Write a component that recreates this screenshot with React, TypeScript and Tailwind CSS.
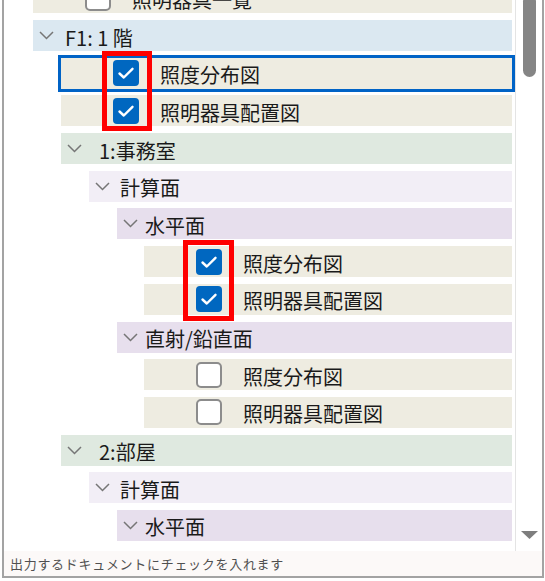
import React from 'react';

type Row =
  | { kind: 'leaf'; indent: string; label: string; checked: boolean; selected?: boolean }
  | { kind: 'group'; indent: string; label: string; bg: string; textGap: string };

const rows: Row[] = [
  { kind: 'leaf', indent: 'ml-[29px]', label: '照明器具一覧', checked: false },
  { kind: 'group', indent: 'ml-[29px]', label: 'F1: 1 階', bg: 'bg-[#dbe8f1]', textGap: 'ml-[11px]' },
  { kind: 'leaf', indent: 'ml-[57px]', label: '照度分布図', checked: true, selected: true },
  { kind: 'leaf', indent: 'ml-[57px]', label: '照明器具配置図', checked: true },
  { kind: 'group', indent: 'ml-[57px]', label: '1:事務室', bg: 'bg-[#dfe9e0]', textGap: 'ml-[17px]' },
  { kind: 'group', indent: 'ml-[85px]', label: '計算面', bg: 'bg-[#f2eef6]', textGap: 'ml-[10px]' },
  { kind: 'group', indent: 'ml-[113px]', label: '水平面', bg: 'bg-[#e7dfed]', textGap: 'ml-[7px]' },
  { kind: 'leaf', indent: 'ml-[140px]', label: '照度分布図', checked: true },
  { kind: 'leaf', indent: 'ml-[140px]', label: '照明器具配置図', checked: true },
  { kind: 'group', indent: 'ml-[113px]', label: '直射/鉛直面', bg: 'bg-[#e7dfed]', textGap: 'ml-[7px]' },
  { kind: 'leaf', indent: 'ml-[140px]', label: '照度分布図', checked: false },
  { kind: 'leaf', indent: 'ml-[140px]', label: '照明器具配置図', checked: false },
  { kind: 'group', indent: 'ml-[57px]', label: '2:部屋', bg: 'bg-[#dfe9e0]', textGap: 'ml-[17px]' },
  { kind: 'group', indent: 'ml-[85px]', label: '計算面', bg: 'bg-[#f2eef6]', textGap: 'ml-[10px]' },
  { kind: 'group', indent: 'ml-[113px]', label: '水平面', bg: 'bg-[#e7dfed]', textGap: 'ml-[7px]' },
];

const Chevron = () => (
  <svg width="15" height="9" viewBox="0 0 15 9" className="ml-[6px] shrink-0">
    <polyline points="1,1 7.5,7.5 14,1" fill="none" stroke="#767676" strokeWidth="1.5" />
  </svg>
);

const CheckBox = ({ checked }: { checked: boolean }) =>
  checked ? (
    <div className="ml-[52px] w-[26px] h-[26px] rounded-[4px] bg-[#0067c0] flex items-center justify-center shrink-0">
      <svg width="18" height="14" viewBox="0 0 18 14">
        <polyline points="2.5,7.5 6.8,11.5 15.5,2.8" fill="none" stroke="#fff" strokeWidth="2.4" strokeLinecap="round" strokeLinejoin="round" />
      </svg>
    </div>
  ) : (
    <div className="ml-[52px] w-[26px] h-[26px] rounded-[5px] bg-white border-2 border-[#8c8c8c] shrink-0" />
  );

export default function App() {
  return (
    <div
      className="relative w-[545px] h-[581px] bg-white overflow-hidden"
      style={{ fontFamily: '"Noto Sans CJK JP", "Noto Sans", sans-serif' }}
    >
      <div className="ml-[2px] w-[542px] h-[578px] border-l-2 border-r-2 border-b-2 border-[#a3a3a3] flex flex-col">
        {/* tree + scrollbar */}
        <div className="h-[551px] flex overflow-hidden">
          <div className="flex-1 pr-[3px] overflow-hidden">
            <div className="flex flex-col gap-[6.7px] mt-[-17.7px]">
              {rows.map((r, i) =>
                r.kind === 'leaf' ? (
                  <div
                    key={i}
                    className={`${r.indent} h-[31px] bg-[#eeece1] flex items-center ${
                      r.selected ? 'outline-[3px] outline-solid outline-[#0063c6]' : ''
                    }`}
                  >
                    <CheckBox checked={r.checked} />
                    <span className="ml-[21px] pt-[4px] text-[20px] leading-none text-[#1a1a1a] whitespace-nowrap">{r.label}</span>
                  </div>
                ) : (
                  <div key={i} className={`${r.indent} h-[31px] ${r.bg} flex items-center`}>
                    <Chevron />
                    <span className={`${r.textGap} pt-[4px] text-[20px] leading-none text-[#1a1a1a] whitespace-nowrap`}>{r.label}</span>
                  </div>
                )
              )}
            </div>
          </div>
          {/* scrollbar */}
          <div className="w-[27px] border-l border-[#e4e4e4] flex flex-col items-center">
            <div className="w-[13px] h-[82px] mt-[-5px] rounded-full bg-[#858585]" />
            <div className="flex-1" />
            <svg width="17" height="8" viewBox="0 0 17 8" className="mb-[12px]">
              <polygon points="0,0 17,0 8.5,8" fill="#7e7e7e" />
            </svg>
          </div>
        </div>
        {/* status bar */}
        <div className="flex-1 bg-[#fcf9f8] flex items-center pl-[6px]">
          <span className="text-[13px] tracking-[0.7px] leading-none text-[#505050] whitespace-nowrap">
            出力するドキュメントにチェックを入れます
          </span>
        </div>
      </div>

      {/* annotation boxes */}
      <div className="absolute left-[102px] top-[51px] w-[50px] h-[80px] border-[5px] border-[#ff0000]" />
      <div className="absolute left-[183px] top-[240px] w-[51px] h-[81px] border-[5px] border-[#ff0000]" />
    </div>
  );
}
